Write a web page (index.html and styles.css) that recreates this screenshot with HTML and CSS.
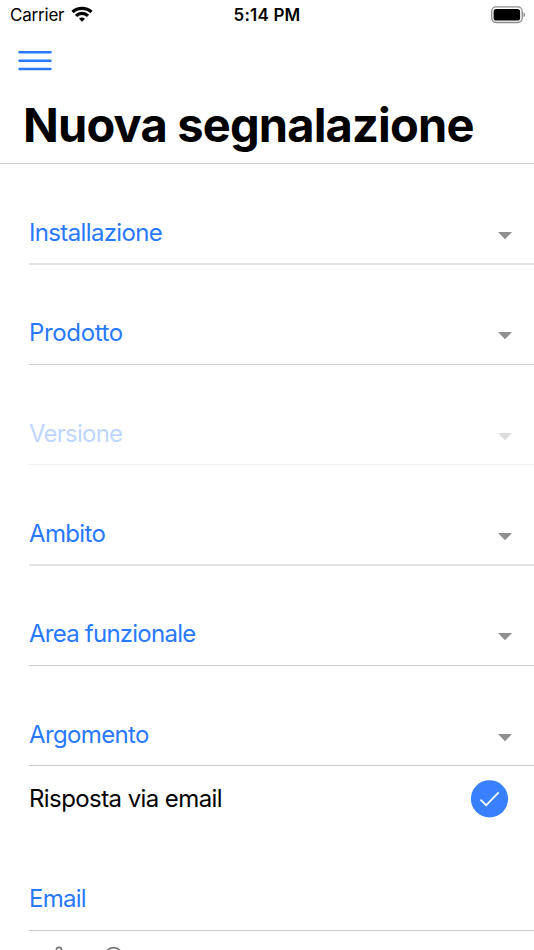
FILE: index.html
```html
<!DOCTYPE html>
<html lang="it">
<head>
<meta charset="utf-8">
<title>Nuova segnalazione</title>
<link rel="stylesheet" href="styles.css">
</head>
<body>
<div class="screen">
  <div class="status">
    <div class="status-left"><span class="carrier">Carrier</span>
      <svg class="wifi" width="22" height="16" viewBox="0 0 22 16"><g fill="none" stroke="#000" stroke-width="3.3"><path d="M1.5 6a14 14 0 0 1 19 0"/><path d="M5 9.9a8.6 8.6 0 0 1 12 0"/></g><path d="M8 12.8a4.4 4.4 0 0 1 6 0L11 15.8z"/></svg>
    </div>
    <span class="time">5:14 PM</span>
    <svg class="battery" width="35" height="18" viewBox="0 0 35 18"><rect x=".7" y=".9" width="30.5" height="15.6" rx="4.4" fill="none" stroke="#8b8b8b" stroke-width="1.3"/><rect x="2.6" y="2.9" width="26.5" height="11.6" rx="2.6"/><path d="M32.5 6.2c2 .8 2 4.2 0 5z" fill="#8b8b8b"/></svg>
  </div>
  <div class="menu"><svg width="34" height="22" viewBox="0 0 34 22"><path d="M1.5 2.2h31M1.5 10.7h31M1.5 19.1h31" stroke="#2979ff" stroke-width="2.5" stroke-linecap="round"/></svg></div>
  <h1>Nuova segnalazione</h1>
  <main class="form">
    <div class="field soft"><span>Installazione</span><svg class="caret" width="14" height="8" viewBox="0 0 14 8"><path d="M0 0h14L7 7.3z"/></svg></div>
    <div class="field"><span class="wide">Prodotto</span><svg class="caret" width="14" height="8" viewBox="0 0 14 8"><path d="M0 0h14L7 7.3z"/></svg></div>
    <div class="field disabled"><span class="tight">Versione</span><svg class="caret" width="14" height="8" viewBox="0 0 14 8"><path d="M0 0h14L7 7.3z"/></svg></div>
    <div class="field soft"><span>Ambito</span><svg class="caret" width="14" height="8" viewBox="0 0 14 8"><path d="M0 0h14L7 7.3z"/></svg></div>
    <div class="field"><span class="tight">Area funzionale</span><svg class="caret" width="14" height="8" viewBox="0 0 14 8"><path d="M0 0h14L7 7.3z"/></svg></div>
    <div class="field"><span>Argomento</span><svg class="caret" width="14" height="8" viewBox="0 0 14 8"><path d="M0 0h14L7 7.3z"/></svg></div>
    <div class="reply"><span>Risposta via email</span><svg class="check" width="38" height="38" viewBox="0 0 38 38"><circle cx="18.5" cy="18.8" r="18.6" fill="#3880ff"/><path d="M9.5 19.6l5.7 5.6L27.7 12.4" fill="none" stroke="#fff" stroke-width="1.7"/></svg></div>
    <div class="field email"><span class="tight">Email</span></div>
    <div class="tools">
      <svg width="20" height="20" viewBox="0 0 20 20"><circle cx="10" cy="4" r="2.6" fill="none" stroke="#777" stroke-width="1.6"/></svg>
      <svg width="20" height="20" viewBox="0 0 20 20"><circle cx="10.6" cy="10.6" r="9" fill="none" stroke="#777" stroke-width="1.6"/></svg>
    </div>
  </main>
</div>
</body>
</html>
```
FILE: styles.css
```css
* { box-sizing: border-box; }
body { margin: 0; background: #fff; font-family: Inter, sans-serif; color: #000; }
.screen { width: 534px; height: 950px; overflow: hidden; }
.status { height: 30px; display: grid; grid-template-columns: 1fr auto 1fr; align-items: center; padding: 0 8px 0 10px; }
.status-left { display: flex; align-items: center; gap: 7px; }
.carrier { font-size: 17px; line-height: 30px; letter-spacing: -0.2px; }
.wifi { margin-top: -2px; }
.time { font-size: 17px; line-height: 30px; font-weight: 600; letter-spacing: 0.2px; margin-left: -2px; }
.battery { justify-self: end; margin-top: -1px; }
.menu { height: 61px; padding: 20px 0 0 18px; }
.menu svg { display: block; }
h1 { margin: 0; height: 73px; padding: 4px 0 0 23px; border-bottom: 1px solid #d2d2d2; font-size: 47px; line-height: 60px; font-weight: 700; letter-spacing: -0.83px; white-space: nowrap; }
.form { display: flex; flex-direction: column; padding-left: 29px; }
.field { flex: none; height: 100.33px; display: flex; justify-content: space-between; padding: 53px 22px 0 0; border-bottom: 1px solid #cfcfcf; color: #2979ff; font-size: 24px; line-height: 32px; letter-spacing: -0.64px; }
.field.soft { height: 101px; margin-bottom: -0.67px; border-bottom: 2px solid #e3e3e3; }
.field.disabled { opacity: .3; }
.field .wide { letter-spacing: -0.35px; }
.field .tight { letter-spacing: -0.76px; }
.field.email { padding-top: 52px; }
.caret { margin-top: 15px; fill: #8f8f8f; }
.reply { height: 65px; display: flex; justify-content: space-between; align-items: flex-start; padding: 14px 25px 0 0; font-size: 24px; line-height: 37px; letter-spacing: -0.58px; }
.tools { display: flex; gap: 34px; padding: 15px 0 0 20px; }
```
